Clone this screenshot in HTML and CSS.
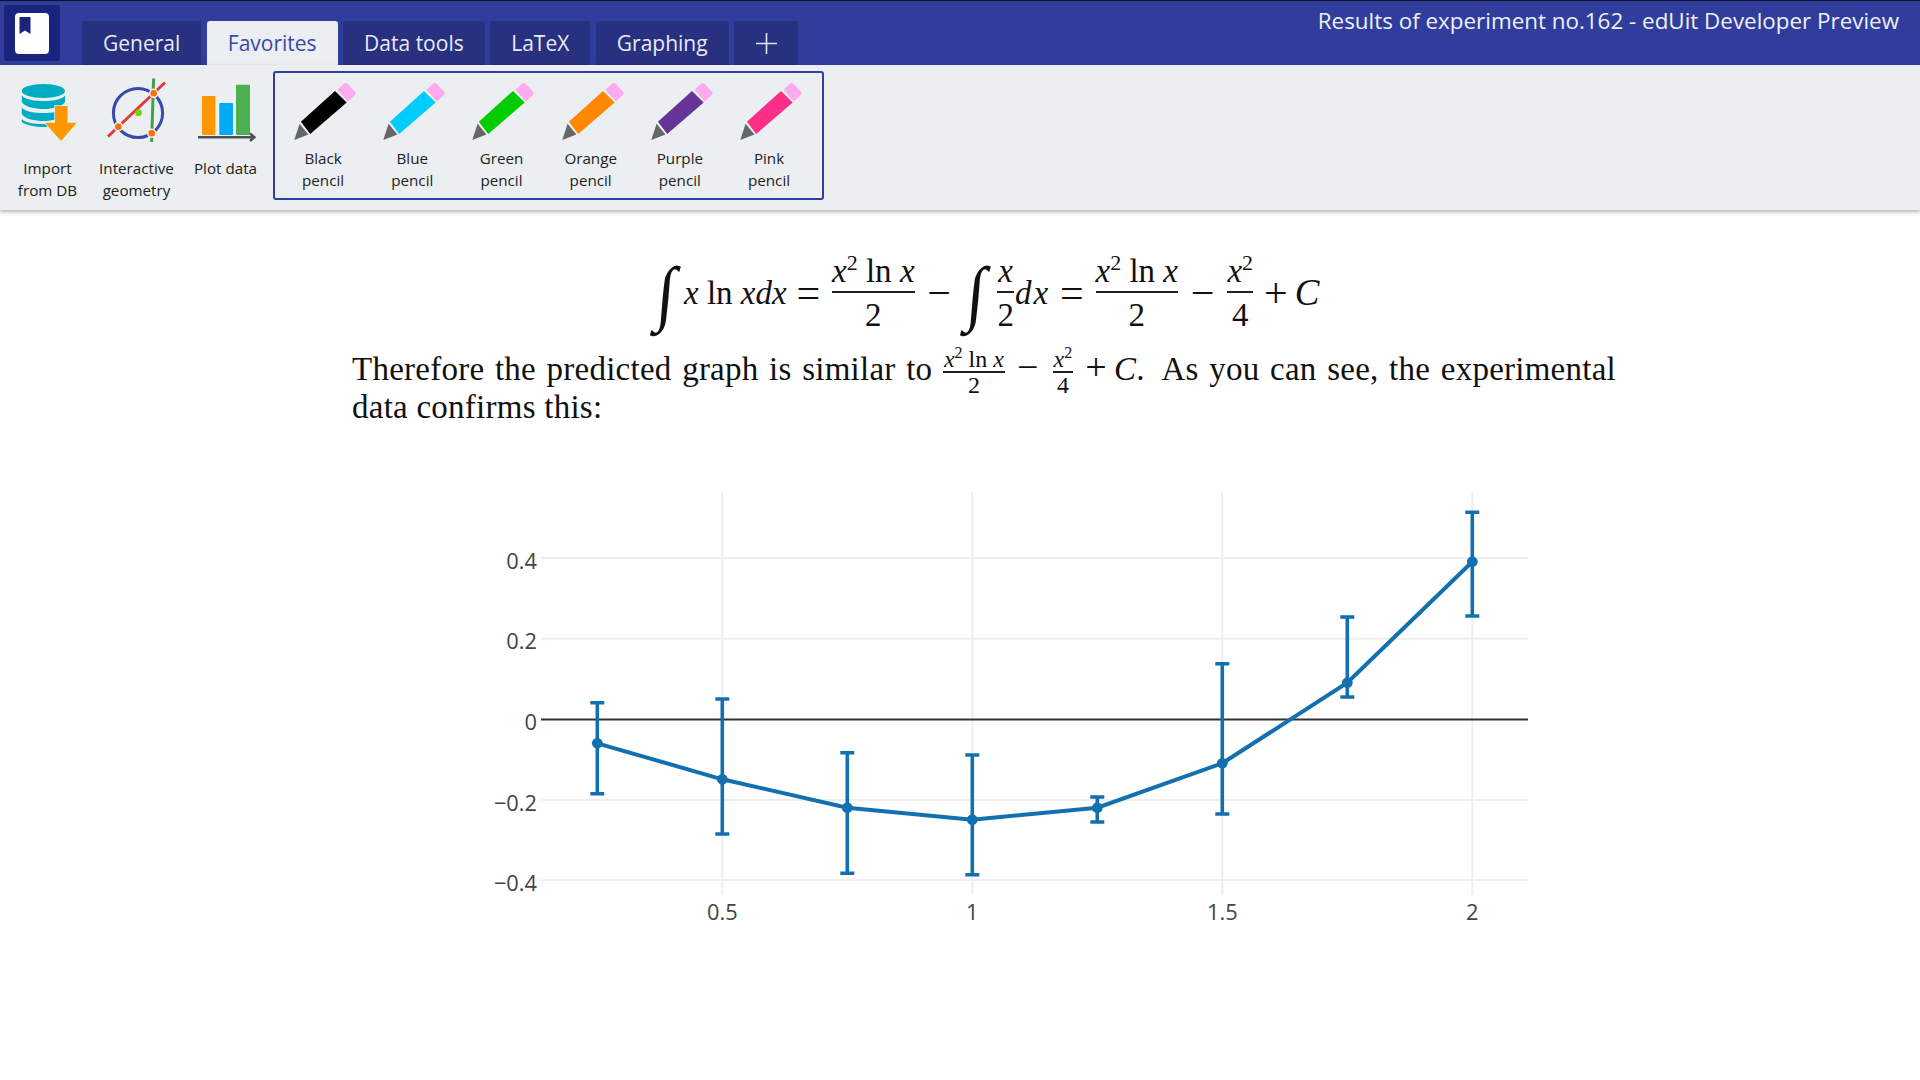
FILE: index.html
```html
<!DOCTYPE html>
<html lang="en">
<head>
<meta charset="utf-8">
<title>edUit</title>
<link rel="stylesheet" href="styles.css">
</head>
<body>
<svg class="defs" width="0" height="0" aria-hidden="true">
  <symbol id="pencil" viewBox="-6 0 70 64">
    <polygon class="lead" points="0.3,60 5.6,43.8 14.4,54.6"/>
    <polygon class="barrel" points="6.9,41.7 41,10.9 52.7,22.5 16.2,54"/>
    <path class="rubber" d="M43.4 9.8 L50.2 3.6 Q52 2.2 53.6 3.8 L61 11.6 Q62.4 13.3 60.9 14.9 L53.9 21.6 Z"/>
  </symbol>
</svg>

<header class="topbar">
  <div class="logo">
    <svg class="logo-icon" viewBox="0 0 34 41" width="34" height="41">
      <rect class="logo-book" width="34" height="41" rx="4"/>
      <polygon class="logo-mark" points="4.5,4 15.5,4 15.5,21 10,17.5 4.5,21"/>
    </svg>
  </div>
  <nav class="tabs">
    <div class="tab">General</div>
    <div class="tab tab-active">Favorites</div>
    <div class="tab">Data tools</div>
    <div class="tab">LaTeX</div>
    <div class="tab">Graphing</div>
    <div class="tab tab-plus">
      <svg viewBox="0 0 21 21" width="21" height="21"><path class="plus" d="M10.5 0V21M0 10.5H21"/></svg>
    </div>
  </nav>
  <div class="title">Results of experiment no.162 - edUit Developer Preview</div>
</header>

<section class="ribbon">
  <div class="tool">
    <svg class="tool-icon" viewBox="3 76 89 76">
      <g class="db">
        <ellipse cx="43.4" cy="91" rx="21.6" ry="7"/>
        <path d="M21.8 95.5 C25 100 36 101 43.4 101 S62 100 65 95.5 V102 C62 107 52 109 43.4 109 S25 107 21.8 102Z"/>
        <path d="M21.8 107.5 C25 112 36 113 43.4 113 S62 112 65 107.5 V114 C62 119 52 121 43.4 121 S25 119 21.8 114Z"/>
        <path d="M21.8 119 C25 123 34 124 43.4 124 L60 124 L50 127 L43.4 127 C36 127 25 125 21.8 122Z"/>
      </g>
      <polygon class="db-arrow" points="55,106 67.6,106 67.6,122.7 76.7,122.7 61,141 45,122.7 55,122.7"/>
    </svg>
    <div class="tool-label">Import<br>from DB</div>
  </div>
  <div class="tool">
    <svg class="tool-icon" viewBox="92 76 89 76">
      <circle class="geo-circle" cx="138" cy="113" r="24.6"/>
      <line class="geo-red" x1="108" y1="136.5" x2="165" y2="82.5"/>
      <line class="geo-green" x1="153.6" y1="78.5" x2="151.6" y2="142"/>
      <circle class="geo-dot" cx="153.7" cy="93.3" r="4"/>
      <circle class="geo-dot" cx="118.3" cy="126.7" r="4"/>
      <circle class="geo-dot" cx="151.7" cy="133.3" r="4"/>
      <circle class="geo-lime" cx="138.5" cy="112.7" r="3.4"/>
    </svg>
    <div class="tool-label">Interactive<br>geometry</div>
  </div>
  <div class="tool">
    <svg class="tool-icon" viewBox="181 76 89 76">
      <rect class="bar-orange" x="202" y="96" width="13.4" height="39" rx="1"/>
      <rect class="bar-blue" x="219.3" y="103" width="13.7" height="32" rx="1"/>
      <rect class="bar-green" x="236" y="84.7" width="14" height="50.3" rx="1"/>
      <path class="bar-axis" d="M198 137.3H254M250 133.5L254.5 137.3L250 141"/>
    </svg>
    <div class="tool-label">Plot data</div>
  </div>

  <div class="pencils">
    <div class="pencil pencil-black"><svg class="pencil-icon"><use href="#pencil"/></svg><div class="tool-label">Black<br>pencil</div></div>
    <div class="pencil pencil-blue"><svg class="pencil-icon"><use href="#pencil"/></svg><div class="tool-label">Blue<br>pencil</div></div>
    <div class="pencil pencil-green"><svg class="pencil-icon"><use href="#pencil"/></svg><div class="tool-label">Green<br>pencil</div></div>
    <div class="pencil pencil-orange"><svg class="pencil-icon"><use href="#pencil"/></svg><div class="tool-label">Orange<br>pencil</div></div>
    <div class="pencil pencil-purple"><svg class="pencil-icon"><use href="#pencil"/></svg><div class="tool-label">Purple<br>pencil</div></div>
    <div class="pencil pencil-pink"><svg class="pencil-icon"><use href="#pencil"/></svg><div class="tool-label">Pink<br>pencil</div></div>
  </div>
</section>

<main class="doc">
  <div class="display">
    <span class="int">∫</span>
    <span class="run run-a"><i>x</i> ln <i>xdx</i></span>
    <span class="op op-eq">=</span>
    <span class="frac frac-wide"><span class="num"><i>x</i><sup>2</sup> ln <i>x</i></span><span class="den">2</span></span>
    <span class="op op-minus">−</span>
    <span class="int int-b">∫</span>
    <span class="frac frac-x"><span class="num"><i>x</i></span><span class="den">2</span></span>
    <span class="run run-dx"><i>dx</i></span>
    <span class="op op-eq2">=</span>
    <span class="frac frac-wide"><span class="num"><i>x</i><sup>2</sup> ln <i>x</i></span><span class="den">2</span></span>
    <span class="op op-minus">−</span>
    <span class="frac frac-x2"><span class="num"><i>x</i><sup>2</sup></span><span class="den">4</span></span>
    <span class="op op-plus">+</span>
    <span class="run run-c"><i>C</i></span>
  </div>

  <p class="para">Therefore the predicted graph is similar to <span class="ifrac ifrac-wide"><span class="inum"><i>x</i><sup>2</sup> ln <i>x</i></span><span class="iden">2</span></span><span class="iop">−</span><span class="ifrac ifrac-b"><span class="inum"><i>x</i><sup>2</sup></span><span class="iden">4</span></span><span class="iop iop-plus">+</span><i>C</i><span class="stop">.</span> As you can see, the experimental data confirms this:</p>

  <svg class="chart" viewBox="410 480 1130 470" width="1130" height="470">
    <g class="grid">
      <path d="M722.3 492V895M972.3 492V895M1222.3 492V895M1472.3 492V895"/>
      <path d="M541 558H1528M541 638.7H1528M541 800H1528M541 880H1528"/>
    </g>
    <line class="zero" x1="541" y1="719.5" x2="1528" y2="719.5"/>
    <g class="err">
      <path d="M597.3 702.7V793.7M590.3 702.7H604.3M590.3 793.7H604.3"/>
      <path d="M722.3 699V834M715.3 699H729.3M715.3 834H729.3"/>
      <path d="M847.3 752.7V873.3M840.3 752.7H854.3M840.3 873.3H854.3"/>
      <path d="M972.3 755V874.7M965.3 755H979.3M965.3 874.7H979.3"/>
      <path d="M1097.3 797V822M1090.3 797H1104.3M1090.3 822H1104.3"/>
      <path d="M1222.3 663.7V814M1215.3 663.7H1229.3M1215.3 814H1229.3"/>
      <path d="M1347.3 617V697M1340.3 617H1354.3M1340.3 697H1354.3"/>
      <path d="M1472.3 512.3V616M1465.3 512.3H1479.3M1465.3 616H1479.3"/>
    </g>
    <polyline class="trace" points="597.3,743.3 722.3,779.3 847.3,807.7 972.3,819.7 1097.3,807.7 1222.3,763.3 1347.3,682.7 1472.3,561.7"/>
    <g class="pts">
      <circle cx="597.3" cy="743.3" r="5.4"/><circle cx="722.3" cy="779.3" r="5.4"/>
      <circle cx="847.3" cy="807.7" r="5.4"/><circle cx="972.3" cy="819.7" r="5.4"/>
      <circle cx="1097.3" cy="807.7" r="5.4"/><circle cx="1222.3" cy="763.3" r="5.4"/>
      <circle cx="1347.3" cy="682.7" r="5.4"/><circle cx="1472.3" cy="561.7" r="5.4"/>
    </g>
    <g class="ylabels">
      <text x="537" y="568.5">0.4</text>
      <text x="537" y="649">0.2</text>
      <text x="537" y="729.5">0</text>
      <text x="537" y="810.5">−0.2</text>
      <text x="537" y="891">−0.4</text>
    </g>
    <g class="xlabels">
      <text x="722.3" y="920">0.5</text>
      <text x="972.3" y="920">1</text>
      <text x="1222.3" y="920">1.5</text>
      <text x="1472.3" y="920">2</text>
    </g>
  </svg>
</main>
</body>
</html>
```
FILE: styles.css
```css
* { box-sizing: border-box; }
html, body { margin: 0; height: 100%; }
body {
  background: #fff;
  font-family: "Open Sans", "Noto Sans", sans-serif;
  overflow: hidden;
}
.defs { position: absolute; }

.topbar {
  display: flex;
  height: 65px;
  background: #303d9c;
  border-top: 1px solid #10121f;
}
.logo {
  width: 56px;
  height: 56px;
  margin: 4px 0 0 4px;
  background: #1a237e;
  border-radius: 3px;
  display: flex;
  justify-content: center;
  align-items: center;
}
.logo-icon { display: block; }
.logo-book { fill: #fff; }
.logo-mark { fill: #1a237e; }

.tabs {
  display: flex;
  gap: 5.5px;
  margin: 20px 0 0 22px;
}
.tab {
  display: flex;
  align-items: center;
  justify-content: center;
  padding: 0 21px;
  height: 44px;
  background: #283080;
  color: #e8eaf6;
  border-radius: 3px 3px 0 0;
  font-size: 21px;
}
.tab-active { background: #eceff1; color: #3949ab; }
.tab-plus { width: 64px; padding: 0; }
.plus { stroke: #dfe3f2; stroke-width: 1.6; fill: none; }

.title {
  margin-left: auto;
  padding: 5px 21px 0 0;
  color: #eef0f8;
  font-size: 22.4px;
  line-height: 30px;
}

.ribbon {
  position: relative;
  display: flex;
  align-items: flex-start;
  height: 145px;
  padding: 0 0 0 3px;
  background: #eceff1;
  box-shadow: 0 2px 4px rgba(0, 0, 0, .3);
}
.tool {
  width: 89px;
  padding-top: 11px;
  text-align: center;
}
.tool-icon { display: block; width: 89px; height: 76px; }
.tool-label {
  margin-top: 5px;
  font-size: 15.2px;
  line-height: 22px;
  color: #212121;
  text-align: center;
}
.db { fill: #00acc1; }
.db-arrow { fill: #ff9800; stroke: #eceff1; stroke-width: 1.5; paint-order: stroke; }
.geo-circle { fill: none; stroke: #3949ab; stroke-width: 3; }
.geo-red { stroke: #e53935; stroke-width: 3; }
.geo-green { stroke: #43a047; stroke-width: 3; }
.geo-dot { fill: #ff6d00; stroke: #eceff1; stroke-width: 1.5; }
.geo-lime { fill: #76d210; }
.bar-orange { fill: #ff9800; }
.bar-blue { fill: #03a9f4; }
.bar-green { fill: #4caf50; }
.bar-axis { fill: none; stroke: #505050; stroke-width: 2.4; }

.pencils {
  display: flex;
  height: 129px;
  margin: 6px 0 0 3px;
  padding: 5px 0 0 3.5px;
  width: 551px;
  border: 2px solid #303f9f;
  border-radius: 3px;
}
.pencil { width: 89.2px; }
.pencil-icon { display: block; width: 70px; height: 64px; margin: 2px auto 0; }
.pencil .tool-label { margin-top: 3px; }
.lead { fill: #666; }
.rubber { fill: #ffaaee; }
.barrel { fill: currentColor; }
.pencil-black { color: #000; }
.pencil-blue { color: #00ccff; }
.pencil-green { color: #00cc00; }
.pencil-orange { color: #ff8800; }
.pencil-purple { color: #663399; }
.pencil-pink { color: #ff2e88; }

.doc {
  font-family: "Liberation Serif", serif;
  color: #111;
  margin-left: 352px;
  width: 1264px;
}
.display {
  display: flex;
  align-items: center;
  justify-content: center;
  height: 90px;
  margin-top: 38px;
  padding-left: 9px;
  font-size: 33px;
  line-height: 38px;
}
.int {
  font-size: 60px;
  line-height: 84px;
  transform: skewX(-5deg) scale(1.1, 1.2);
  margin: 0 10px 0 0;
  font-style: italic;
}
.int-b { margin: 0 13px 0 4px; }
.run { white-space: nowrap; }
.run-dx { letter-spacing: 2px; }
.run-c { font-size: 37px; }
.op { font-size: 42px; }
.op-eq { margin: 0 12px 0 10px; }
.op-eq2 { margin: 0 12px 0 10px; }
.op-minus { margin: 0 13px; }
.op-plus { margin: 0 7px 0 11px; }
.frac {
  display: inline-flex;
  flex-direction: column;
  align-items: center;
}
.frac-wide { width: 82px; }
.frac-x { margin-right: 1px; }
.num {
  border-bottom: 2px solid #222;
  padding: 0 0 1px;
  min-width: 100%;
  text-align: center;
  white-space: nowrap;
}
.den { padding-top: 3px; }
.num sup { font-size: 22px; line-height: 0; }
.para {
  margin: 12px 0 0;
  font-size: 33px;
  line-height: 38px;
  letter-spacing: .25px;
  text-align: justify;
}
.ifrac {
  display: inline-flex;
  flex-direction: column;
  align-items: center;
  vertical-align: middle;
  margin: -14px 0 -14px;
  font-size: 24px;
  line-height: 24px;
  letter-spacing: 0;
}
.inum {
  border-bottom: 2px solid #222;
  padding: 0 1px;
  min-width: 100%;
  text-align: center;
  white-space: nowrap;
}
.inum sup { font-size: 16px; line-height: 0; }
.iop { margin: 0 14px 0 12px; font-size: 38px; line-height: 30px; }
.iop-plus { margin: 0 7px 0 12px; }
.stop { margin-right: 8px; }

.chart { display: block; margin: 54px 0 0 58px; }
.grid path { stroke: #eeeeee; stroke-width: 2; fill: none; }
.zero { stroke: #333; stroke-width: 1.8; }
.err path { stroke: #126fb0; stroke-width: 3.6; fill: none; }
.trace { stroke: #126fb0; stroke-width: 4; fill: none; }
.pts circle { fill: #126fb0; }
.ylabels text, .xlabels text {
  font-family: "Open Sans", sans-serif;
  font-size: 21.8px;
  fill: #444;
}
.ylabels text { text-anchor: end; }
.xlabels text { text-anchor: middle; }
```
